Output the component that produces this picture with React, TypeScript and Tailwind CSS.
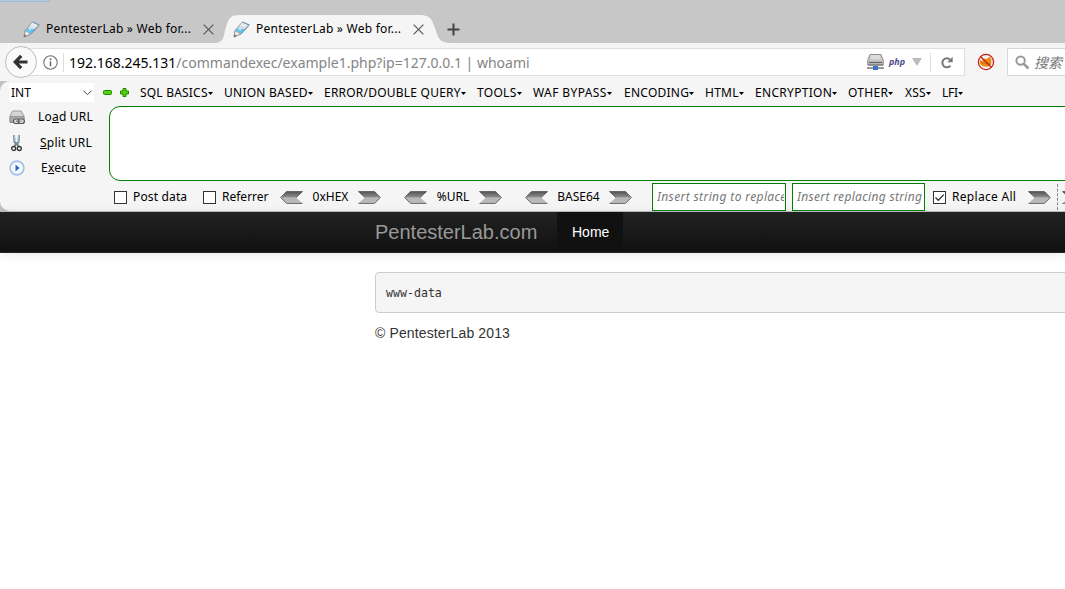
import React from 'react';

const UI = "font-['Noto_Sans','Noto_Sans_CJK_SC',sans-serif]";

function PenIcon() {
  return (
    <svg width="17" height="17" viewBox="0 0 17 17" className="shrink-0">
      <path d="M1 16 L2 9.5 L9.5 1 L16 4 L8 13 Z" fill="#d9dee2" stroke="#8f979d" strokeWidth="1" strokeLinejoin="round" />
      <path d="M4 7.6 L12.3 8.2 L8 12.8 L2.6 9.6 Z" fill="#5cc4ee" />
      <path d="M9.5 1.5 L15.3 4.2 L13 6.6 L7 4.5 Z" fill="#e9edef" />
      <path d="M9.5 1 L16 4 L8 13" fill="none" stroke="#7b99b4" strokeWidth="1.1" />
      <path d="M2.2 9.5 L7.5 13 L1 16 Z" fill="#f0eee9" stroke="#8e8e8e" strokeWidth=".7" />
      <path d="M1 16 L1.5 13.3 L3.6 14.8 Z" fill="#666" />
      <circle cx="7" cy="8.5" r="1" fill="#c4efff" />
    </svg>
  );
}

function CloseIcon() {
  return (
    <svg width="11" height="11" viewBox="0 0 11 11" className="shrink-0">
      <path d="M.6 .6 L10.4 10.4 M10.4 .6 L.6 10.4" stroke="#555" strokeWidth="1.15" />
    </svg>
  );
}

function Tab({ active = false }: { active?: boolean }) {
  return (
    <div className="relative flex h-7 w-[210px] items-center">
      {active && (
        <svg className="absolute -left-[19px] top-0" width="236" height="28" viewBox="0 0 236 28">
          <path d="M0 28 C11 28 9 21 12 12 C15 3 16 0 26 0 H205 C217 0 218 5 221 13 C224 23 226 28 236 28 Z" fill="#f5f5f5" />
        </svg>
      )}
      <div className="relative flex h-full items-center">
        <PenIcon />
        <span className="ml-[6px] w-[157px] whitespace-nowrap text-[12px] tracking-[0.23px] text-black">PentesterLab » Web for...</span>
        <CloseIcon />
      </div>
    </div>
  );
}

function Arrow({ left = false, className = '' }: { left?: boolean; className?: string }) {
  return (
    <svg width="23" height="13" viewBox="0 0 23 13" className={`shrink-0 ${className}`}>
      <defs>
        <linearGradient id="metal" x1="0" y1="0" x2="0" y2="1">
          <stop offset="0" stopColor="#555" />
          <stop offset=".48" stopColor="#8b8b8b" />
          <stop offset=".52" stopColor="#b5b5b5" />
          <stop offset="1" stopColor="#bcbcbc" />
        </linearGradient>
      </defs>
      <g transform={left ? 'translate(23 0) scale(-1 1)' : undefined}>
        <path d="M.5 .5 H16.5 L22.3 6.5 L16.5 12.3 H.5 L7 6.5 Z" fill="url(#metal)" />
        <path d="M.5 .6 H16.5 L22.3 6.5 M.5 .6 L7 6.5" fill="none" stroke="#4d4d4d" strokeWidth=".8" />
        <path d="M.5 12.4 H16.5 L22.3 6.5" fill="none" stroke="#666" strokeWidth="1" />
      </g>
    </svg>
  );
}

function Check({ on = false }: { on?: boolean }) {
  return (
    <span className="flex h-[13px] w-[13px] shrink-0 items-center justify-center border border-[#333] bg-white">
      {on && (
        <svg width="11" height="11" viewBox="0 0 11 11">
          <path d="M1.5 5.5 L4.3 8.3 L9.8 2.6" fill="none" stroke="#333" strokeWidth="1.3" />
        </svg>
      )}
    </span>
  );
}

const menus = [
  { name: 'SQL BASICS', cls: 'w-[84px] tracking-[0.2px]' },
  { name: 'UNION BASED', cls: 'w-[100px] tracking-[0.25px]' },
  { name: 'ERROR/DOUBLE QUERY', cls: 'w-[153px] tracking-[0.22px]' },
  { name: 'TOOLS', cls: 'w-[56px] tracking-[0.3px]' },
  { name: 'WAF BYPASS', cls: 'w-[91px] tracking-[0.4px]' },
  { name: 'ENCODING', cls: 'w-[81px] tracking-[0.25px]' },
  { name: 'HTML', cls: 'w-[50px] tracking-[0.25px]' },
  { name: 'ENCRYPTION', cls: 'w-[93px] tracking-[0.3px]' },
  { name: 'OTHER', cls: 'w-[57px] tracking-[0.3px]' },
  { name: 'XSS', cls: 'w-[37px] tracking-[0.2px]' },
  { name: 'LFI', cls: 'w-[32px] tracking-[-0.2px]' },
];

function MenuBar() {
  return (
    <div className="flex h-6 items-center">
      <svg width="9" height="5" viewBox="0 0 9 5" className="ml-[103px] shrink-0">
        <rect x=".5" y=".5" width="8" height="4" rx="1" fill="#4fd10b" stroke="#238a00" />
      </svg>
      <svg width="9" height="9" viewBox="0 0 9 9" className="ml-2 shrink-0">
        <path d="M3 .5 H6 V3 H8.5 V6 H6 V8.5 H3 V6 H.5 V3 H3 Z" fill="#4fd10b" stroke="#238a00" />
      </svg>
      <div className="ml-[11px] flex">
        {menus.map((m) => (
          <div key={m.name} className={`flex shrink-0 items-center whitespace-nowrap text-[12px] ${m.cls}`}>
            <span>{m.name}</span>
            <svg width="5" height="3" viewBox="0 0 5 3" className="mt-0.5 shrink-0">
              <path d="M0 0 H5 L2.5 3 Z" fill="#000" />
            </svg>
          </div>
        ))}
      </div>
    </div>
  );
}

function TabStrip() {
  return (
    <div className="h-[43px] bg-[#c7c7c7]">
      <div className="h-[15px]">
        <div className="h-[2px] w-[50px] border-b border-r border-[#9bbbd8] bg-[#b5cadd]" />
      </div>
      <div className="flex h-7 items-center pl-[23px]">
        <Tab />
        <Tab active />
        <svg width="13" height="13" viewBox="0 0 13 13" className="ml-[4px]">
          <path d="M6.5 .5 V12.5 M.5 6.5 H12.5" stroke="#444" strokeWidth="2" />
        </svg>
      </div>
    </div>
  );
}

function AddressRow() {
  return (
    <div className="flex h-[38px] items-center bg-[#f5f5f5] pl-[5px]">
      <div className="z-10 flex h-8 w-8 shrink-0 items-center justify-center rounded-full border border-[#bdbdbd] bg-[#fafafa]">
        <svg width="16" height="16" viewBox="0 0 16 16">
          <path d="M8.2 1.8 L2.2 8 L8.2 14.2 M2.8 8 H14.5" fill="none" stroke="#333" strokeWidth="3.2" />
        </svg>
      </div>
      <div className="-ml-4 flex h-7 w-[944px] shrink-0 items-center border border-[#dedede] bg-white pl-[21px]">
        <svg width="15" height="15" viewBox="0 0 15 15" className="shrink-0">
          <circle cx="7.5" cy="7.5" r="6.7" fill="none" stroke="#777" strokeWidth="1.1" />
          <path d="M7.5 6.3 V11.3" stroke="#666" strokeWidth="1.5" />
          <circle cx="7.5" cy="4.2" r=".95" fill="#666" />
        </svg>
        <div className="ml-[5px] h-[19px] w-px bg-[#ddd]" />
        <div className="ml-[5px] w-[798px] whitespace-nowrap text-[14px] text-[#858585]">
          <span className="text-black">192.168.245.131</span>/commandexec/example1.php?ip=127.0.0.1 | whoami
        </div>
        <svg width="17" height="16" viewBox="0 0 17 16" className="shrink-0">
          <path d="M3 .5 H14 L16.3 6.5 V11 H.7 V6.5 Z" fill="#c9c9c9" stroke="#777" strokeWidth=".8" />
          <path d="M4 2 H13 M3.5 4 H13.5" stroke="#efefef" />
          <path d="M1 7 H16 V10.5 H1 Z" fill="#b5b5b5" />
          <path d="M2 8.5 H15 M1 11 H16" stroke="#666" />
          <path d="M0 14 H17" stroke="#777" strokeWidth="1.5" />
          <rect x="6" y="12" width="5" height="4" fill="#3c72ca" />
        </svg>
        <span className="mb-0.5 ml-[5px] w-[19px] whitespace-nowrap text-[9px] font-bold italic leading-none text-[#4c4c87]">php</span>
        <svg width="10" height="8" viewBox="0 0 10 8" className="ml-1 shrink-0"><path d="M0 0 H10 L5 8 Z" fill="#bbb" /></svg>
        <div className="ml-[8px] h-[19px] w-px bg-[#ddd]" />
        <svg width="12" height="13" viewBox="0 0 12 13" className="ml-2.5 shrink-0">
          <path d="M9.4 9.6 A4.5 4.5 0 1 1 9.2 3.8" fill="none" stroke="#777" strokeWidth="2" />
          <path d="M11.7 .7 V6.2 H6.2 Z" fill="#777" />
        </svg>
      </div>
      <svg width="18" height="18" viewBox="0 0 18 18" className="ml-3 shrink-0">
        <path d="M3 7 L5 8 L7 5.5 L9.5 6 L13 3.5 L14.5 7 L14 12 L10 14 L5 13 L3 10.5 Z" fill="#ed8e10" />
        <path d="M4 9 L7 10.5 L10 9.5 L13 11" stroke="#b66300" fill="none" strokeWidth=".7" />
        <circle cx="9" cy="9" r="7.6" fill="none" stroke="#c9201b" strokeWidth="1.3" />
        <path d="M3.7 3.7 L14.3 14.3" stroke="#c9201b" strokeWidth="1.4" />
      </svg>
      <div className="ml-3 flex h-7 w-[80px] shrink-0 items-center border border-[#d8d8d8] bg-white pl-[7px]">
        <svg width="15" height="15" viewBox="0 0 15 15" className="shrink-0">
          <circle cx="5.6" cy="5.6" r="4.2" fill="none" stroke="#999" strokeWidth="2" />
          <path d="M8.8 8.8 L13.5 13.5" stroke="#999" strokeWidth="2.6" />
        </svg>
        <span className="ml-1 whitespace-nowrap text-[14px] italic text-[#777]">搜索</span>
      </div>
    </div>
  );
}

function SideActions() {
  return (
    <div className="flex w-[109px] shrink-0 flex-col text-[12px] tracking-[0.2px]">
      <div className="flex h-[22px] items-center pl-[9px]">
        <svg width="16" height="16" viewBox="0 0 16 16" className="mt-0.5">
          <path d="M3.5 1 H12 L15 6 V12.5 H1 V6 Z" fill="#d5d5d5" stroke="#999" />
          <path d="M1 6.5 H15 V12 H1 Z" fill="#aaa" stroke="#888" strokeWidth=".7" />
          <rect x="4.5" y="9" width="6" height="4.5" rx="2" fill="#ddd" stroke="#555" strokeWidth="1.2" />
          <rect x="9.3" y="9" width="6" height="4.5" rx="2" fill="#ddd" stroke="#555" strokeWidth="1.2" />
          <path d="M7 11.2 H12.5" stroke="#666" />
        </svg>
        <span className="ml-[13px] whitespace-nowrap">Lo<u>a</u>d URL</span>
      </div>
      <div className="flex h-[29px] items-center pl-[11px]">
        <svg width="11" height="18" viewBox="0 0 11 18">
          <path d="M3 1 L3.5 8 L7.7 12 M8 1 L7.5 8 L3.3 12" fill="none" stroke="#6b8998" strokeWidth="2" />
          <path d="M3.3 1 L4.2 8 M7.7 1 L6.8 8" stroke="#c8dce5" strokeWidth=".7" />
          <circle cx="2.7" cy="14.5" r="2" fill="none" stroke="#333" strokeWidth="1.3" />
          <circle cx="8.3" cy="14.5" r="2" fill="none" stroke="#333" strokeWidth="1.3" />
        </svg>
        <span className="ml-[18px] whitespace-nowrap"><u>S</u>plit URL</span>
      </div>
      <div className="flex h-[22px] items-center pl-[9px]">
        <svg width="16" height="16" viewBox="0 0 16 16">
          <circle cx="8" cy="8" r="6.9" fill="#eaf3ff" stroke="#a3bfe4" strokeWidth="1.6" />
          <circle cx="8" cy="8" r="5" fill="#f8fbff" />
          <path d="M6.5 4.4 L10.5 8 L6.5 11.6 Z" fill="#2767b5" />
        </svg>
        <span className="ml-[16px] whitespace-nowrap">E<u>x</u>ecute</span>
      </div>
    </div>
  );
}

function Tools() {
  return (
    <div className="flex h-[30px] items-center whitespace-nowrap pl-[114px] pt-[2px] text-[12px]">
      <Check />
      <span className="ml-1.5 w-[70px] shrink-0 tracking-[0.15px]">Post data</span>
      <Check />
      <span className="ml-1.5 w-[58px] shrink-0">Referrer</span>
      <Arrow left />
      <span className="w-[55px] shrink-0 text-center">0xHEX</span>
      <Arrow />
      <Arrow left className="ml-[23px]" />
      <span className="w-[52px] shrink-0 text-center">%URL</span>
      <Arrow />
      <Arrow left className="ml-[23px]" />
      <span className="w-[61px] shrink-0 text-center">BASE64</span>
      <Arrow />
      <div className="ml-5 flex h-7 w-[134px] shrink-0 items-center border border-[#008000] bg-white pl-1 pr-px italic tracking-[0.38px] text-[#777]">
        <span className="w-full overflow-hidden">Insert string to replace</span>
      </div>
      <div className="ml-1.5 flex h-7 w-[133px] shrink-0 items-center border border-[#008000] bg-white pl-1 pr-0.5 italic tracking-[0.33px] text-[#777]">
        <span className="w-full overflow-hidden">Insert replacing string</span>
      </div>
      <span className="ml-2"><Check on /></span>
      <span className="ml-1.5 w-[76px] shrink-0 tracking-[0.3px]">Replace All</span>
      <Arrow />
      <div className="ml-[6px] h-[26px] border-l border-dashed border-[#888]" />
      <Arrow className="ml-1" />
    </div>
  );
}

export default function App() {
  return (
    <div className={`h-[589px] w-[1065px] overflow-hidden bg-white text-black ${UI}`}>
      <TabStrip />
      <AddressRow />
      <div className="h-[131px] bg-[#c0c0c0]">
        <div className="h-[130px] overflow-hidden rounded-l-[10px] bg-[#f5f5f5]">
          <div className="flex h-[25px] items-center">
            <div className="-mr-[94px] mb-[2px] ml-[9px] flex h-[19px] w-[85px] shrink-0 items-center justify-between bg-white pl-0.5 pr-0.5 text-[12px]">
              <span>INT</span>
              <svg width="9" height="6" viewBox="0 0 9 6"><path d="M.5 .7 L4.5 4.7 L8.5 .7" fill="none" stroke="#444" /></svg>
            </div>
            <div className="pb-[2px]"><MenuBar /></div>
          </div>
          <div className="flex h-[75px]">
            <SideActions />
            <div className="h-[75px] w-[980px] shrink-0 rounded-[11px] border border-[#008000] bg-white" />
          </div>
          <Tools />
        </div>
      </div>
      <div className="flex h-[41px] items-center border-b border-[#252525] bg-linear-to-b from-[#222] to-[#111] pl-[375px] font-['Liberation_Sans',sans-serif] shadow-[0_1px_10px_rgba(0,0,0,0.1)]">
        <span className="w-[182px] text-[20px] text-[#999]">PentesterLab.com</span>
        <span className="flex h-full w-[66px] items-center bg-[#111] pl-[15px] text-[14px] text-white">Home</span>
      </div>
      <div className="pl-[375px] pt-[19px] font-['Liberation_Sans',sans-serif] text-[14px] text-[#333]">
        <div className="flex h-[41px] w-[940px] items-center rounded-[4px] border border-[#ccc] bg-[#f5f5f5] pl-2.5 pt-0.5 font-['DejaVu_Sans_Mono',monospace] text-[11.6px]">www-data</div>
        <p className="mt-[10px] leading-5 tracking-[0.13px]">© PentesterLab 2013</p>
      </div>
    </div>
  );
}
